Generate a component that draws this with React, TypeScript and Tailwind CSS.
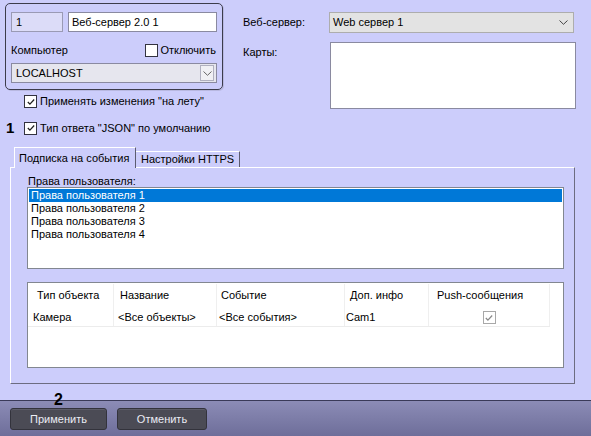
import React from 'react';

const cols = [
  { w: 86, head: 'Тип объекта', hp: 9, cell: 'Камера', cp: 5 },
  { w: 103, head: 'Название', hp: 6, cell: '<Все объекты>', cp: 4 },
  { w: 128, head: 'Событие', hp: 4, cell: '<Все события>', cp: 2 },
  { w: 84, head: 'Доп. инфо', hp: 5, cell: 'Cam1', cp: 1 },
  { w: 121, head: 'Push-сообщения', hp: 8, cell: '', cp: 0 },
];

const users = ['Права пользователя 1', 'Права пользователя 2', 'Права пользователя 3', 'Права пользователя 4'];

function Check({ checked, disabled }: { checked?: boolean; disabled?: boolean }) {
  return (
    <span
      className={`w-[13px] h-[13px] shrink-0 border bg-white flex items-center justify-center ${
        disabled ? 'border-[#a8a8a8] w-[11px] h-[11px]' : 'border-[#333340]'
      }`}
    >
      {checked && (
        <svg viewBox="0 0 11 11" className="w-[10px] h-[10px]">
          <path
            d="M2 5.5 L4.3 7.8 L9 2.8"
            fill="none"
            stroke={disabled ? '#8a8a8a' : '#222'}
            strokeWidth="1.4"
          />
        </svg>
      )}
    </span>
  );
}

function Chevron({ color = '#555' }: { color?: string }) {
  return (
    <svg viewBox="0 0 9 5" className="w-[9px] h-[5px]">
      <path d="M0.5 0.5 L4.5 4.3 L8.5 0.5" fill="none" stroke={color} strokeWidth="1" />
    </svg>
  );
}

export default function App() {
  return (
    <div className="w-[591px] h-[436px] bg-[#cccdfb] flex flex-col text-[11px] leading-[13px] text-black font-['Liberation_Sans',Arial,sans-serif] overflow-hidden">
      {/* top */}
      <div className="flex h-[147px] shrink-0">
        <div className="w-[222px] pl-[5px] pt-[3px] flex flex-col">
          <div className="w-[218px] h-[87px] border border-[#3c3c4c] rounded-[5px] pl-[5px] pt-[8px] flex flex-col shadow-[1px_1px_0_#b8b8e0]">
            <div className="flex gap-[5px]">
              <div className="w-[52px] h-[20px] border border-[#9a9ab4] bg-[#dcdcf8] flex items-center pl-[4px]">1</div>
              <div className="w-[149px] h-[20px] border border-[#8a8aa0] bg-white flex items-center pl-[3px]">Веб-сервер 2.0 1</div>
            </div>
            <div className="flex items-center justify-between h-[22px] mt-[7px] pr-[6px]">
              <span>Компьютер</span>
              <div className="flex items-center gap-[2px]">
                <Check />
                <span>Отключить</span>
              </div>
            </div>
            <div className="w-[206px] h-[20px] mt-[2px] border border-[#8a8aa0] bg-[#e6e6ee] flex items-center justify-between pl-[4px] pr-[2px]">
              <span>LOCALHOST</span>
              <div className="w-[14px] h-[16px] border border-[#b0b0c0] bg-[#f0f0f4] flex items-center justify-center">
                <Chevron color="#666" />
              </div>
            </div>
          </div>
          <div className="flex items-center mt-[5px] ml-[19px] h-[13px] gap-[3px]">
            <Check checked />
            <span>Применять изменения "на лету"</span>
          </div>
          <div className="flex items-center mt-[12px] h-[16px]">
            <span className="w-[19px] pl-[1px] text-[15px] font-bold leading-[16px]">1</span>
            <Check checked />
            <span className="ml-[3px]">Тип ответа "JSON" по умолчанию</span>
          </div>
        </div>
        <div className="ml-[21px] pt-[12px] flex flex-col">
          <div className="flex items-center">
            <span className="w-[86px]">Веб-сервер:</span>
            <div className="w-[245px] h-[21px] border border-[#adadad] bg-[#e3e3e3] flex items-center justify-between pl-[3px] pr-[5px]">
              <span>Web сервер 1</span>
              <Chevron color="#444" />
            </div>
          </div>
          <div className="flex mt-[9px]">
            <span className="w-[87px] pt-[4px]">Карты:</span>
            <div className="w-[246px] h-[67px] border border-[#8a8aa0] bg-white" />
          </div>
        </div>
      </div>

      {/* tabs */}
      <div className="ml-[10px] flex flex-col">
        <div className="flex items-end pl-[4px] relative z-10">
          <div className="w-[122px] h-[21px] -mb-px bg-[#cccdfb] border-t border-l border-white border-r border-r-[#5c5c70] flex items-center pl-[4px]">
            Подписка на события
          </div>
          <div className="w-[104px] h-[16px] border-t border-white border-r border-r-[#5c5c70] flex items-center pl-[5px]">
            Настройки HTTPS
          </div>
        </div>
        <div className="w-[565px] h-[217px] border-t border-l border-white border-r border-b border-r-[#6c6c80] border-b-[#6c6c80] pl-[16px] pt-[7px] flex flex-col">
          <span className="leading-[12px] pl-[1px]">Права пользователя:</span>
          <div className="w-[537px] h-[82px] border border-[#828790] bg-white p-[1px] flex flex-col">
            {users.map((u, i) => (
              <div key={u} className={`h-[13px] pl-[2px] ${i === 0 ? 'bg-[#0078d7] text-white' : ''}`}>
                {u}
              </div>
            ))}
          </div>
          <div className="w-[537px] h-[86px] mt-[13px] border border-[#828790] bg-white flex flex-col">
            <div className="flex h-[22px] mt-px">
              {cols.map((c, i) => (
                <div
                  key={c.head}
                  style={{ width: c.w, paddingLeft: c.hp }}
                  className={`flex items-center border-r border-[#efefef] ${i === 4 ? 'justify-start' : ''}`}
                >
                  {c.head}
                </div>
              ))}
            </div>
            <div className="flex h-[21px] border-b border-[#ececec] w-[522px]">
              {cols.map((c, i) => (
                <div
                  key={c.head}
                  style={{ width: c.w, paddingLeft: c.cp }}
                  className={`flex items-center pt-[3px] border-r border-[#efefef] ${i === 4 ? 'justify-center' : ''}`}
                >
                  {i === 4 ? <Check checked disabled /> : c.cell}
                </div>
              ))}
            </div>
          </div>
        </div>
      </div>

      {/* bottom bar */}
      <div className="relative mt-[16px] flex-1 border-t border-[#3a3a58] bg-gradient-to-b from-[#8c8cb6] to-[#6e6e9a] flex items-start gap-[10px] pl-[10px] pt-[7px]">
        <span className="absolute left-[54px] top-[-9px] text-[16px] font-bold leading-[16px]">2</span>
        <button className="w-[97px] h-[22px] rounded-[3px] bg-[#4b4b55] border border-[#33333c] text-[#ececf4] text-[11px] shadow-[inset_0_1px_0_#5c5c68]">
          Применить
        </button>
        <button className="w-[90px] h-[22px] rounded-[3px] bg-[#4b4b55] border border-[#33333c] text-[#ececf4] text-[11px] shadow-[inset_0_1px_0_#5c5c68]">
          Отменить
        </button>
      </div>
    </div>
  );
}
